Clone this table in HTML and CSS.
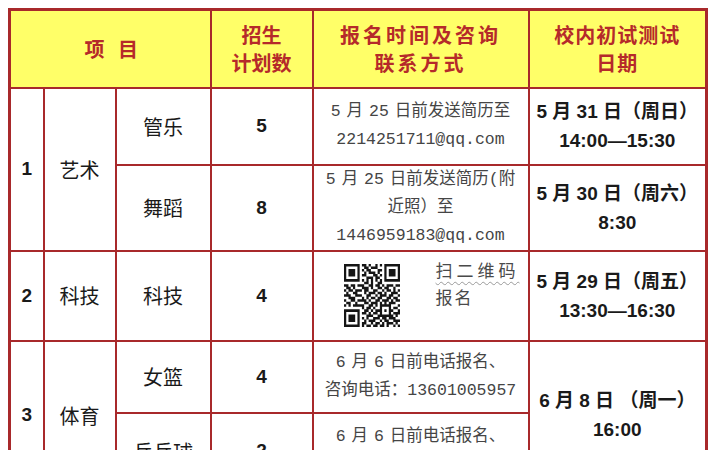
FILE: index.html
```html
<!DOCTYPE html>
<html lang="zh-CN">
<head>
<meta charset="utf-8">
<title>招生计划</title>
<link rel="stylesheet" href="styles.css">
</head>
<body>
<div class="page">
<table class="plan">
  <colgroup>
    <col class="c-no"><col class="c-cat"><col class="c-item"><col class="c-num"><col class="c-contact"><col class="c-date">
  </colgroup>
  <thead>
    <tr class="r-head">
      <th colspan="3"><span class="h-item">项 目</span></th>
      <th>招生<br>计划数</th>
      <th class="h-contact">报名时间及咨询<br>联系方式</th>
      <th class="h-date">校内初试测试<br>日期</th>
    </tr>
  </thead>
  <tbody>
    <tr class="r1">
      <td rowspan="2" class="no">1</td>
      <td rowspan="2" class="cat">艺术</td>
      <td class="item">管乐</td>
      <td class="num">5</td>
      <td class="contact">5 月 25 日前发送简历至<br>2214251711@qq.com</td>
      <td class="date">5 月 31 日（周日）<br>14:00—15:30</td>
    </tr>
    <tr class="r2">
      <td class="item">舞蹈</td>
      <td class="num">8</td>
      <td class="contact">5 月 25 日前发送简历(附<br>近照）至<br>1446959183@qq.com</td>
      <td class="date">5 月 30 日（周六）<br>8:30</td>
    </tr>
    <tr class="r3">
      <td class="no">2</td>
      <td class="cat">科技</td>
      <td class="item">科技</td>
      <td class="num">4</td>
      <td class="contact qr-cell">
        <div class="qr-wrap">
          <svg class="qr" viewBox="0 0 25 25" preserveAspectRatio="none" aria-hidden="true">
            <path fill="#151515" d="M0 0h7v1h-7zM8 0h2v1h-2zM11 0h1v1h-1zM14 0h1v1h-1zM16 0h1v1h-1zM18 0h7v1h-7z
M0 1h1v1h-1zM6 1h1v1h-1zM9 1h2v1h-2zM12 1h3v1h-3zM18 1h1v1h-1zM24 1h1v1h-1z
M0 2h1v1h-1zM2 2h3v1h-3zM6 2h1v1h-1zM8 2h1v1h-1zM10 2h2v1h-2zM15 2h2v1h-2zM18 2h1v1h-1zM20 2h3v1h-3zM24 2h1v1h-1z
M0 3h1v1h-1zM2 3h3v1h-3zM6 3h1v1h-1zM9 3h1v1h-1zM11 3h3v1h-3zM15 3h1v1h-1zM18 3h1v1h-1zM20 3h3v1h-3zM24 3h1v1h-1z
M0 4h1v1h-1zM2 4h3v1h-3zM6 4h1v1h-1zM8 4h2v1h-2zM13 4h2v1h-2zM16 4h1v1h-1zM18 4h1v1h-1zM20 4h3v1h-3zM24 4h1v1h-1z
M0 5h1v1h-1zM6 5h1v1h-1zM10 5h3v1h-3zM14 5h2v1h-2zM18 5h1v1h-1zM24 5h1v1h-1z
M0 6h7v1h-7zM8 6h1v1h-1zM10 6h1v1h-1zM12 6h1v1h-1zM14 6h1v1h-1zM16 6h1v1h-1zM18 6h7v1h-7z
M9 7h2v1h-2zM12 7h1v1h-1zM15 7h2v1h-2z
M0 8h2v1h-2zM3 8h2v1h-2zM6 8h3v1h-3zM11 8h2v1h-2zM14 8h2v1h-2zM17 8h1v1h-1zM19 8h3v1h-3zM23 8h2v1h-2z
M1 9h2v1h-2zM4 9h1v1h-1zM8 9h3v1h-3zM12 9h1v1h-1zM15 9h2v1h-2zM18 9h2v1h-2zM22 9h1v1h-1z
M0 10h1v1h-1zM2 10h2v1h-2zM5 10h3v1h-3zM9 10h2v1h-2zM13 10h2v1h-2zM17 10h1v1h-1zM19 10h2v1h-2zM22 10h1v1h-1zM24 10h1v1h-1z
M1 11h1v1h-1zM4 11h2v1h-2zM9 11h1v1h-1zM11 11h3v1h-3zM15 11h2v1h-2zM18 11h1v1h-1zM21 11h3v1h-3z
M0 12h3v1h-3zM5 12h3v1h-3zM10 12h2v1h-2zM14 12h1v1h-1zM16 12h3v1h-3zM20 12h2v1h-2zM24 12h1v1h-1z
M2 13h3v1h-3zM8 13h1v1h-1zM10 13h1v1h-1zM12 13h2v1h-2zM15 13h2v1h-2zM19 13h2v1h-2zM22 13h2v1h-2z
M0 14h1v1h-1zM3 14h2v1h-2zM6 14h4v1h-4zM11 14h1v1h-1zM14 14h2v1h-2zM17 14h3v1h-3zM21 14h1v1h-1zM23 14h2v1h-2z
M1 15h2v1h-2zM5 15h1v1h-1zM9 15h2v1h-2zM12 15h3v1h-3zM16 15h1v1h-1zM18 15h1v1h-1zM20 15h3v1h-3z
M0 16h1v1h-1zM2 16h1v1h-1zM4 16h5v1h-5zM11 16h2v1h-2zM14 16h1v1h-1zM16 16h5v1h-5zM24 16h1v1h-1z
M8 17h1v1h-1zM10 17h2v1h-2zM13 17h1v1h-1zM16 17h1v1h-1zM20 17h1v1h-1zM22 17h2v1h-2z
M0 18h7v1h-7zM9 18h2v1h-2zM12 18h1v1h-1zM14 18h3v1h-3zM18 18h1v1h-1zM20 18h2v1h-2zM24 18h1v1h-1z
M0 19h1v1h-1zM6 19h1v1h-1zM8 19h2v1h-2zM11 19h1v1h-1zM13 19h2v1h-2zM16 19h1v1h-1zM20 19h1v1h-1zM22 19h3v1h-3z
M0 20h1v1h-1zM2 20h3v1h-3zM6 20h1v1h-1zM10 20h3v1h-3zM15 20h7v1h-7zM23 20h1v1h-1z
M0 21h1v1h-1zM2 21h3v1h-3zM6 21h1v1h-1zM8 21h1v1h-1zM10 21h1v1h-1zM13 21h3v1h-3zM17 21h2v1h-2zM20 21h3v1h-3z
M0 22h1v1h-1zM2 22h3v1h-3zM6 22h1v1h-1zM9 22h1v1h-1zM11 22h3v1h-3zM16 22h1v1h-1zM18 22h2v1h-2zM22 22h3v1h-3z
M0 23h1v1h-1zM6 23h1v1h-1zM8 23h2v1h-2zM12 23h1v1h-1zM14 23h2v1h-2zM17 23h1v1h-1zM19 23h3v1h-3zM23 23h1v1h-1z
M0 24h7v1h-7zM8 24h1v1h-1zM10 24h2v1h-2zM13 24h2v1h-2zM16 24h2v1h-2zM19 24h1v1h-1zM22 24h1v1h-1zM24 24h1v1h-1z"/>
          </svg>
          <div class="qr-text">
            <span class="scan">扫二维码</span><br>
            <span class="signup">报名</span>
          </div>
        </div>
      </td>
      <td class="date">5 月 29 日（周五）<br>13:30—16:30</td>
    </tr>
    <tr class="r4">
      <td rowspan="2" class="no">3</td>
      <td rowspan="2" class="cat">体育</td>
      <td class="item">女篮</td>
      <td class="num">4</td>
      <td class="contact">6 月 6 日前电话报名、<br>咨询电话：13601005957</td>
      <td rowspan="2" class="date">6 月 8 日 （周一）<br>16:00</td>
    </tr>
    <tr class="r5">
      <td class="item">乒乓球</td>
      <td class="num">2</td>
      <td class="contact">6 月 6 日前电话报名、<br>咨询电话：13601005957</td>
    </tr>
  </tbody>
</table>
</div>
</body>
</html>
```

FILE: styles.css
```css
html, body {
  margin: 0;
  padding: 0;
  background: #ffffff;
  overflow: hidden;
}

body {
  font-family: "Noto Sans CJK SC", sans-serif;
  color: #1e1e1e;
}

.page {
  padding: 8px 0 0 8px;
}

.plan {
  border-collapse: collapse;
  table-layout: fixed;
  width: 699px;
  border: 3px solid #a8292b;
}

.c-no { width: 34px; }
.c-cat { width: 72px; }
.c-item { width: 95px; }
.c-num { width: 102px; }
.c-contact { width: 216px; }
.c-date { width: 178px; }

.plan th,
.plan td {
  border: 2px solid #a8292b;
  padding: 0;
  text-align: center;
  vertical-align: middle;
}

.plan th {
  background: #ffff68;
  color: #b52a2a;
  font-family: "Noto Sans CJK SC", sans-serif;
  font-weight: 700;
  font-size: 20px;
  line-height: 28px;
}

.h-item {
  word-spacing: 9px;
  margin-left: 2px;
}

.h-contact {
  letter-spacing: 3px;
}

.h-date {
  letter-spacing: 1px;
}

.r-head { height: 78px; }
.r1 { height: 77px; }
.r2 { height: 86px; }
.r3 { height: 90px; }
.r4 { height: 72px; }
.r5 { height: 78px; }

.no {
  font-family: "Liberation Sans", "Noto Sans CJK SC", sans-serif;
  font-weight: 700;
  font-size: 19px;
  color: #1a1a1a;
}

.cat,
.item {
  font-size: 20px;
  color: #1a1a1a;
}

.num {
  font-family: "Liberation Sans", "Noto Sans CJK SC", sans-serif;
  font-weight: 700;
  font-size: 19px;
  color: #1a1a1a;
}

.contact {
  font-family: "Liberation Mono", "Noto Sans CJK SC", monospace;
  font-size: 16.5px;
  line-height: 28px;
  word-spacing: -4px;
  color: #454545;
}

.date {
  font-family: "Liberation Sans", "Noto Sans CJK SC", sans-serif;
  font-weight: 700;
  font-size: 19px;
  line-height: 29px;
  color: #1a1a1a;
}

.qr-wrap {
  display: flex;
  align-items: center;
  height: 88px;
  padding-left: 30px;
  gap: 36px;
  word-spacing: normal;
}

.qr {
  display: block;
  width: 56px;
  height: 63px;
  flex: none;
}

.qr-text {
  align-self: flex-start;
  margin-top: 4px;
  text-align: left;
  font-family: "Noto Sans CJK SC", sans-serif;
  font-size: 17px;
  line-height: 27px;
  color: #4a4a4a;
}

.scan {
  letter-spacing: 4px;
  text-decoration: underline wavy #9a9a9a;
  text-decoration-thickness: 1px;
  text-underline-offset: 4px;
}

.signup {
  letter-spacing: 2px;
}
```
